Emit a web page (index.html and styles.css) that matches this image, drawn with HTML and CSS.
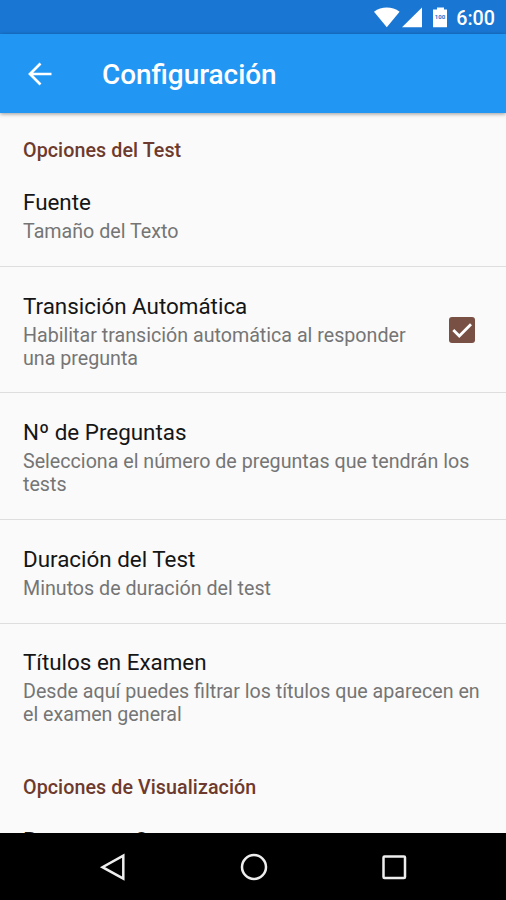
FILE: index.html
```html
<!DOCTYPE html>
<html lang="es">

<head>
  <meta charset="UTF-8">
  <meta name="viewport" content="width=device-width, initial-scale=1.0">
  <title>Configuración</title>
  <link rel="stylesheet" href="styles.css">
</head>

<body>
  <div class="screen">
    <div class="status-bar">
      <svg class="status-icons" width="76" height="24" viewBox="0 0 76 24" fill="#fff">
        <path d="M1 5.700C8.600 .2 19 .2 26.600 5.700L13.800 21.300z" />
        <path d="M49 1.500V21.300H29z" />
        <path d="M64 1.500h7v2h3v17.800h-14V3.500h4z" />
        <text class="battery-level" x="61.800" y="12.500">100</text>
      </svg>
      <span class="clock">6:00</span>
    </div>

    <header class="toolbar">
      <svg class="back" width="24" height="24" viewBox="0 0 24 24">
        <path d="M23.500 12H2M12.500 1.500L2 12l10.500 10.500" fill="none" stroke="#fff" stroke-width="2.700" />
      </svg>
      <h1>Configuración</h1>
    </header>

    <main class="settings">
      <h2 class="category">Opciones del Test</h2>
      <div class="item first">
        <div class="item-text">
          <div class="title">Fuente</div>
          <div class="summary">Tamaño del Texto</div>
        </div>
      </div>
      <div class="item">
        <div class="item-text">
          <div class="title">Transición Automática</div>
          <div class="summary">Habilitar transición automática al responder una pregunta</div>
        </div>
        <svg class="checkbox" width="26" height="26" viewBox="0 0 26 26">
          <rect width="26" height="26" rx="3" fill="#795044" />
          <path d="M4.300 13l6 6L22 7.200" fill="none" stroke="#fff" stroke-width="2.800" />
        </svg>
      </div>
      <div class="item">
        <div class="item-text">
          <div class="title">Nº de Preguntas</div>
          <div class="summary">Selecciona el número de preguntas que tendrán los tests</div>
        </div>
      </div>
      <div class="item">
        <div class="item-text">
          <div class="title">Duración del Test</div>
          <div class="summary">Minutos de duración del test</div>
        </div>
      </div>
      <div class="item last">
        <div class="item-text">
          <div class="title">Títulos en Examen</div>
          <div class="summary">Desde aquí puedes filtrar los títulos que aparecen en el examen general</div>
        </div>
      </div>

      <h2 class="category second">Opciones de Visualización</h2>
      <div class="item">
        <div class="item-text">
          <div class="title">Respuesta Correcta</div>
        </div>
      </div>
    </main>

    <nav class="nav-bar">
      <svg width="28" height="28" viewBox="0 0 28 28">
        <path d="M24.300 2.700v23L3.500 14.200z" />
      </svg>
      <svg width="28" height="28" viewBox="0 0 28 28">
        <circle cx="14" cy="14" r="12" />
      </svg>
      <svg width="28" height="28" viewBox="0 0 28 28">
        <rect x="3.500" y="3.500" width="21.500" height="21.500" rx="1" />
      </svg>
    </nav>
  </div>
</body>

</html>
```

FILE: styles.css
```css
* {
  box-sizing: border-box;
}

body {
  margin: 0;
  background: #fafafa;
  font-family: Roboto, "Liberation Sans", sans-serif;
}

h1,
h2 {
  margin: 0;
  font-weight: 500;
}

.screen {
  display: flex;
  flex-direction: column;
  width: 506px;
  height: 900px;
  overflow: hidden;
}

.status-bar {
  display: flex;
  flex: none;
  align-items: center;
  justify-content: flex-end;
  gap: 7px;
  height: 34px;
  padding: 2px 11px 0 0;
  background: #1976d2;
  color: #fff;
}

.battery-level {
  font-size: 6px;
  font-weight: 700;
  fill: #1976d2;
}

.clock {
  font-size: 19.7px;
  font-weight: 500;
}

.toolbar {
  display: flex;
  flex: none;
  align-items: center;
  gap: 50px;
  height: 79px;
  padding-left: 28px;
  background: #2196f3;
  box-shadow: 0 1px 4px rgba(0, 0, 0, 0.4);
  color: #fff;
  z-index: 1;
}

.toolbar h1 {
  padding-top: 2px;
  font-size: 27.9px;
  line-height: 33px;
}

.settings {
  flex: 1;
  min-height: 0;
  overflow: hidden;
}

.category {
  padding: 26px 23px 0;
  color: #6d3a2d;
  font-size: 19.7px;
  letter-spacing: 0.07px;
  line-height: 23px;
}

.category.second {
  padding-top: 27px;
}

.category.second + .item {
  padding-top: 28px;
}

.item {
  display: flex;
  align-items: center;
  justify-content: space-between;
  padding: 25.7px 23px 22.9px;
  border-bottom: 1px solid #dedede;
}

.item.first {
  padding-top: 27px;
}

.item.last {
  border-bottom: none;
}

.title {
  margin-bottom: 5px;
  color: #151515;
  font-size: 22.4px;
  line-height: 26px;
}

.summary {
  color: #757575;
  font-size: 19.67px;
  line-height: 23px;
}

.checkbox {
  flex: none;
  margin: 0 8px 3px 35px;
}

.nav-bar {
  display: flex;
  flex: none;
  align-items: center;
  justify-content: space-between;
  height: 67px;
  padding: 0 98px 0 99px;
  background: #000;
}

.nav-bar svg {
  fill: none;
  stroke: #eee;
  stroke-width: 2.5;
}
```
